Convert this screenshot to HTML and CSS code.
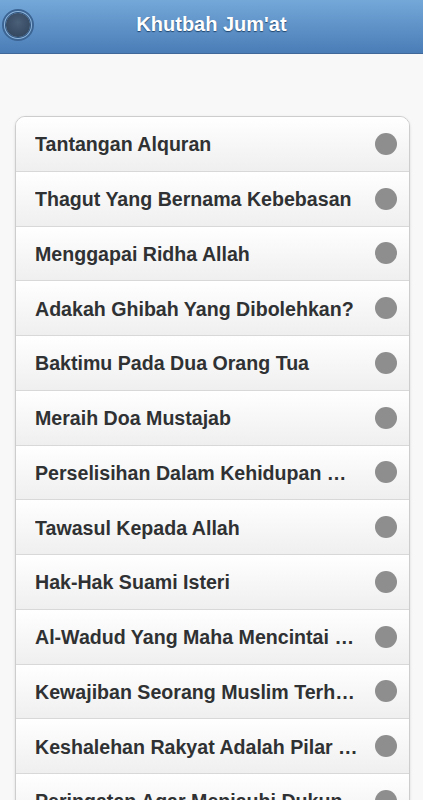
FILE: index.html
```html
<!DOCTYPE html>
<html lang="en">
<head>
    <meta charset="UTF-8">
    <meta name="viewport" content="width=device-width, initial-scale=1.0">
    <title>Khutbah Jum'at</title>
    <link rel="stylesheet" href="styles.css">
</head>
<body>
    <div class="header">
        <a href="#" class="header-btn"><span class="btn-dot"></span></a>
        <h1 class="title">Khutbah Jum'at</h1>
    </div>

    <div class="content">
        <ul class="listview">
            <li><a href="#"><span class="item-text">Tantangan Alquran</span><span class="item-icon"></span></a></li>
            <li><a href="#"><span class="item-text">Thagut Yang Bernama Kebebasan</span><span class="item-icon"></span></a></li>
            <li><a href="#"><span class="item-text">Menggapai Ridha Allah</span><span class="item-icon"></span></a></li>
            <li><a href="#"><span class="item-text">Adakah Ghibah Yang Dibolehkan?</span><span class="item-icon"></span></a></li>
            <li><a href="#"><span class="item-text">Baktimu Pada Dua Orang Tua</span><span class="item-icon"></span></a></li>
            <li><a href="#"><span class="item-text">Meraih Doa Mustajab</span><span class="item-icon"></span></a></li>
            <li><a href="#"><span class="item-text">Perselisihan Dalam Kehidupan …</span><span class="item-icon"></span></a></li>
            <li><a href="#"><span class="item-text">Tawasul Kepada Allah</span><span class="item-icon"></span></a></li>
            <li><a href="#"><span class="item-text">Hak-Hak Suami Isteri</span><span class="item-icon"></span></a></li>
            <li><a href="#"><span class="item-text">Al-Wadud Yang Maha Mencintai …</span><span class="item-icon"></span></a></li>
            <li><a href="#"><span class="item-text">Kewajiban Seorang Muslim Terh…</span><span class="item-icon"></span></a></li>
            <li><a href="#"><span class="item-text">Keshalehan Rakyat Adalah Pilar …</span><span class="item-icon"></span></a></li>
            <li><a href="#"><span class="item-text">Peringatan Agar Menjauhi Dukun…</span><span class="item-icon"></span></a></li>
        </ul>
    </div>
</body>
</html>
```

FILE: styles.css
```css
html, body {
    margin: 0;
    padding: 0;
}
body {
    font-family: "Liberation Sans", Arial, sans-serif;
    background-color: #f8f8f8;
    overflow: hidden;
}
.header {
    height: 53px;
    display: flex;
    align-items: center;
    justify-content: center;
    background: linear-gradient(#74a8d9, #4a7db6);
    border-bottom: 1px solid #40699a;
    position: relative;
}
.header-btn {
    position: absolute;
    left: 2px;
    top: 9px;
    width: 32px;
    height: 32px;
    box-sizing: border-box;
    border-radius: 50%;
    border: 2px solid #3c6594;
    background: #8fb6dc;
    display: flex;
    align-items: center;
    justify-content: center;
}
.btn-dot {
    width: 24px;
    height: 24px;
    border-radius: 50%;
    background: radial-gradient(circle at 50% 40%, #4a5f78, #2d4158);
    box-shadow: 0 0 0 1px #2f5581;
}
.title {
    margin: 0;
    color: #fff;
    font-size: 20px;
    font-weight: bold;
    text-shadow: 0 1px 1px #22466e;
    position: relative;
    top: -2px;
}
.content {
    padding: 62px 13px 0 15px;
}
.listview {
    list-style: none;
    margin: 0;
    padding: 0;
    border: 1px solid #cdcdcd;
    border-radius: 10px;
    overflow: hidden;
    box-shadow: 0 1px 3px rgba(0, 0, 0, 0.12);
}
.listview li {
    border-top: 1px solid #d8d8d8;
}
.listview li:first-child {
    border-top: none;
}
.listview a {
    display: flex;
    align-items: center;
    height: 53.75px;
    box-sizing: border-box;
    padding: 2px 12px 0 19px;
    background: linear-gradient(#ffffff, #efefef);
    color: #2f3133;
    text-decoration: none;
    font-size: 19.6px;
    font-weight: bold;
}
.item-text {
    flex: 1;
    min-width: 0;
    white-space: nowrap;
    overflow: hidden;
    text-overflow: ellipsis;
    padding-right: 6px;
}
.item-icon {
    flex: none;
    width: 22px;
    height: 22px;
    margin-top: -2px;
    border-radius: 50%;
    background: #8e8e8e;
}
```
